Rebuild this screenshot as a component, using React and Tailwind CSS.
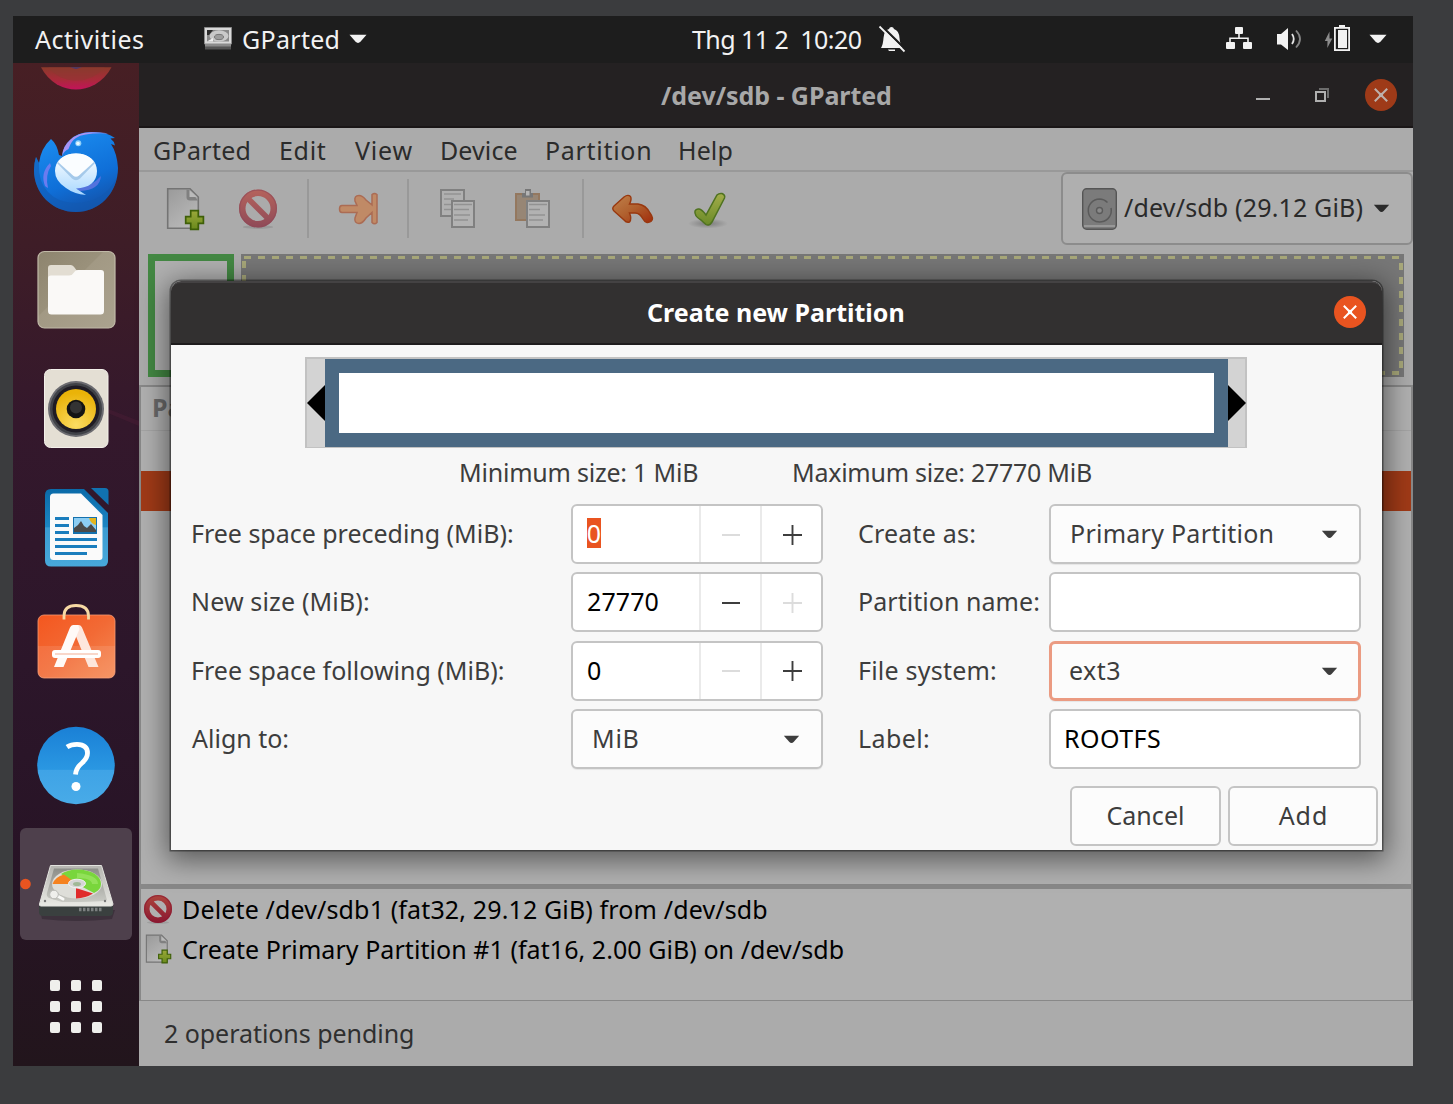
import React from 'react';

/* ---------- shared glyphs ---------- */

function Caret({ className }) {
  return (
    <svg viewBox="0 0 18 10" className={className} fill="currentColor">
      <path d="M0.5 0.8H17.5L11.6 7.6Q9 10.4 6.4 7.6Z" />
    </svg>
  );
}

function CloseDot({ className }) {
  return (
    <span className={'flex h-8 w-8 items-center justify-center rounded-full ' + className}>
      <svg viewBox="0 0 14 14" className="h-[14px] w-[14px]" stroke="currentColor" strokeWidth="2">
        <path d="M0.8 0.8L13.2 13.2M13.2 0.8L0.8 13.2" />
        <circle cx="7" cy="7" r="1.2" fill="currentColor" />
      </svg>
    </span>
  );
}

function Forbidden({ viewBox, className, cx, cy, r, w, from, to }) {
  const id = 'fb' + cx;
  const d = r * 0.62;
  return (
    <svg viewBox={viewBox} className={className}>
      <defs>
        <linearGradient id={id} x1="0" y1={cy - r} x2="0" y2={cy + r} gradientUnits="userSpaceOnUse">
          <stop offset="0" stopColor={from} />
          <stop offset="1" stopColor={to} />
        </linearGradient>
      </defs>
      <ellipse cx={cx} cy={cy + r - 0.5} rx={r * 0.8} ry={r * 0.1} fill="#000" opacity="0.1" />
      <circle cx={cx} cy={cy} r={r - w / 2} fill="none" stroke={'url(#' + id + ')'} strokeWidth={w} />
      <path d={`M${cx - d} ${cy - d}L${cx + d} ${cy + d}`} stroke={'url(#' + id + ')'} strokeWidth={w * 0.85} />
      <circle cx={cx} cy={cy} r={r - 0.6} fill="none" stroke={to} strokeOpacity="0.6" strokeWidth="1.2" />
    </svg>
  );
}

function NewPage({ viewBox, className }) {
  return (
    <svg viewBox={viewBox} className={className}>
      <defs>
        <linearGradient id="pg" x1="0" y1="0" x2="0.6" y2="1">
          <stop offset="0" stopColor="#9a9a9a" />
          <stop offset="1" stopColor="#b8b8b8" />
        </linearGradient>
        <linearGradient id="plus" x1="0" y1="0" x2="0" y2="1">
          <stop offset="0" stopColor="#9aa83a" />
          <stop offset="1" stopColor="#6a8a1c" />
        </linearGradient>
      </defs>
      <path d="M167.700 188.700H190L198.300 197V228.300H167.700Z" fill="url(#pg)" stroke="#747474" strokeWidth="1.600" />
      <path d="M186.500 189.500V197Q186.500 200.500 190 200.500H198L190 190Z" fill="#808080" />
      <path d="M189.500 190V197H197Z" fill="#bababa" />
      <path
        d="M190.700 210.700H198.300V216.700H203.400V223.300H198.300V229.400H190.700V223.300H185.700V216.700H190.700Z"
        fill="url(#plus)"
        stroke="#3e5f08"
        strokeWidth="1.700"
      />
    </svg>
  );
}

/* ---------- top bar ---------- */

function TopBar() {
  return (
    <header className="flex h-[47px] items-center bg-[#1d1d1d] pb-[2px] text-[#f2f2f2]">
      <span className="ml-[22px] w-[109px] tracking-[0.54px]">Activities</span>
      <svg viewBox="204 27 28 24" className="ml-[60px] h-6 w-7 shrink-0">
        <path d="M204.500 27.500H231.500V44H204.500Z" fill="#d9d9d9" stroke="#8a8a8a" />
        <path d="M207 30H229V41.500H207Z" fill="#888" />
        <ellipse cx="219" cy="36" rx="9.500" ry="5.800" fill="#c9c9c9" />
        <path d="M207 30H213L209 35H207Z" fill="#2b2b2b" />
        <ellipse cx="219" cy="37" rx="4.500" ry="2.600" fill="#9d9d9d" stroke="#777" />
        <path d="M207 41.500L213 38V41.500Z" fill="#eee" />
        <path d="M205 44H231V49.500H205Z" fill="#555" />
        <path d="M205 44H231V46.500H205Z" fill="#8b8b8b" />
      </svg>
      <span className="ml-[10px] w-[99px] tracking-[0.3px]">GParted</span>
      <Caret className="ml-[8px] h-[10px] w-[18px] shrink-0" />
      <span className="ml-[325px] w-[172px] whitespace-pre tracking-[-0.54px]">Thg 11 2{'  '}10:20</span>
      <svg viewBox="878 25 28 28" className="ml-[14px] h-7 w-7 shrink-0">
        <path d="M881 48Q883 45 883.500 38Q884 30 889 29Q889.500 27 891.500 27Q893.500 27 894 29Q899 30.500 899.500 38Q900 45 903 48Z" fill="#f2f2f2" />
        <path d="M888 49.500H895V51H889Z" fill="#f2f2f2" />
        <path d="M881 25.500L906 50" stroke="#1d1d1d" strokeWidth="2.400" />
        <path d="M879.500 26.500L904.500 51.500" stroke="#f2f2f2" strokeWidth="1.800" />
      </svg>
      <svg viewBox="1225 25 28 28" className="ml-[319px] h-7 w-7 shrink-0" fill="#f2f2f2">
        <rect x="1235" y="27" width="8" height="7" rx="1" />
        <path d="M1230 42V38.200H1248V42M1239 33V38" fill="none" stroke="#f2f2f2" strokeWidth="1.600" />
        <rect x="1226" y="42" width="9" height="7" rx="1" />
        <rect x="1243" y="42" width="9" height="7" rx="1" />
      </svg>
      <svg viewBox="1275 25 28 28" className="ml-[22px] h-7 w-7 shrink-0">
        <path d="M1277 34H1281L1288 28V50L1281 44.500H1277Z" fill="#f2f2f2" />
        <path d="M1292 34Q1295.500 39 1292 44" fill="none" stroke="#e5e5e5" strokeWidth="1.800" />
        <path d="M1296 30.500Q1304 39 1296 47.500" fill="none" stroke="#858585" strokeWidth="1.800" />
      </svg>
      <svg viewBox="1324 24 28 29" className="ml-[21px] h-[29px] w-7 shrink-0">
        <path d="M1329.500 31.500L1324.800 41H1327.500L1327.300 48L1332.300 38.500H1329.500Z" fill="#8c8c8c" />
        <rect x="1334.900" y="27.900" width="14.200" height="22.200" fill="none" stroke="#f2f2f2" strokeWidth="1.800" />
        <rect x="1339" y="25" width="6" height="3" fill="#f2f2f2" />
        <rect x="1338" y="30" width="9" height="18" fill="#f2f2f2" />
      </svg>
      <Caret className="ml-[17px] h-[10px] w-[18px] shrink-0" />
    </header>
  );
}

/* ---------- dock ---------- */

function Dock() {
  return (
    <nav className="flex w-[126px] shrink-0 flex-col bg-[linear-gradient(180deg,#471f24_0%,#3e1d27_18%,#34182c_36%,#2c162a_60%,#281426_78%,#22151c_100%)]">
      {/* Firefox, scrolled half out of view */}
      <svg viewBox="13 63 126 49" className="h-[49px] w-[126px]">
        <defs>
          <linearGradient id="ff" x1="0" y1="67" x2="0" y2="90" gradientUnits="userSpaceOnUse">
            <stop offset="0" stopColor="#8a3a2a" />
            <stop offset="0.55" stopColor="#a92a3a" />
            <stop offset="1" stopColor="#c4125c" />
          </linearGradient>
        </defs>
        <path d="M41 67.300H111.500Q106 78 95 84.500Q76 94.500 57 84.500Q46.500 78 41 67.300Z" fill="url(#ff)" />
        <path d="M48 67.300H105Q93 81 76 80.500Q59 80.500 48 67.300Z" fill="#8a3a30" opacity="0.5" />
        <path d="M70 67.300H82L76 69Z" fill="#453a70" />
      </svg>

      {/* Thunderbird */}
      <svg viewBox="13 112 126 119" className="h-[119px] w-[126px]">
        <defs>
          <linearGradient id="tb" x1="0.3" y1="0" x2="0.7" y2="1">
            <stop offset="0" stopColor="#1b8df0" />
            <stop offset="0.6" stopColor="#0f6fd8" />
            <stop offset="1" stopColor="#1450a5" />
          </linearGradient>
          <linearGradient id="env" x1="0" y1="0" x2="0" y2="1">
            <stop offset="0" stopColor="#ffffff" />
            <stop offset="1" stopColor="#a9d8ff" />
          </linearGradient>
        </defs>
        <path d="M62 156Q63 146 70 140Q77 132.500 90 132Q106 131 115 138L110.500 138.500Q114 141 115 145.500L111 144Q117 153 118 168C118 193 99 212 76 212C52 212 34 193 34 170Q34 163 36 157L39 163Q41 148 51 139Q57 144 59 155Z" fill="url(#tb)" />
        <path d="M36 157L39 163Q38 182 48 192Q58 203 76 203Q104 203 117 177C113 198 96 212 76 212C52 212 34 193 34 170Q34 163 36 157Z" fill="#1259b0" opacity="0.55" />
        <path d="M62 156Q63 146 70 140Q78 132 92 132.200Q105 132.500 108 133.500Q84 132.500 76 138Q71 141 68.500 149Q64 151 62 156Z" fill="#a994f4" />
        <path d="M50 163Q40 173 45 186Q46 187 48 188Q45 175 51 166Z" fill="#6a7cf0" />
        <path d="M75 188Q92 187 101 176Q100 190 80 191Z" fill="#6f78e6" opacity="0.7" />
        <path d="M76 153.500C89 153.500 97 161 97 171C97 182 89 188 76 188.500L86 195Q74 194 66 188Q55 181 55 171C55 161 63 153.500 76 153.500Z" fill="url(#env)" />
        <path d="M57 163L72 178.500Q76 182 80 178.500L95 163L93 160.500L76 176L59 160.500Z" fill="#9cc3e6" opacity="0.85" />
        <path d="M58 162Q64 153.500 76 153.500Q88 153.500 94 162L79 175.500Q76 178 73 175.500Z" fill="#fafdff" />
        <circle cx="78.300" cy="143.300" r="3" fill="#8fd0fa" />
        <circle cx="78" cy="143.500" r="1.800" fill="#e8f8ff" />
      </svg>

      {/* Files */}
      <svg viewBox="13 231 126 119" className="h-[119px] w-[126px]">
        <defs>
          <linearGradient id="fl" x1="0" y1="0" x2="1" y2="1">
            <stop offset="0" stopColor="#8d846e" />
            <stop offset="0.42" stopColor="#9a917b" />
            <stop offset="0.43" stopColor="#a29984" />
            <stop offset="1" stopColor="#aba38f" />
          </linearGradient>
        </defs>
        <rect x="38" y="251.500" width="77" height="76.500" rx="6.500" fill="url(#fl)" stroke="#c0b9a7" strokeWidth="1.200" />
        <path d="M48 268Q48 265 51 265H71Q73 265 74.500 267.500L77 271V290H48Z" fill="#e2ddd2" />
        <path d="M48 278Q48 275.500 51 275.500H69Q72 275.500 73.500 273L75 271.200Q76 270 78 270H101Q104 270 104 273V311Q104 314.500 100.500 314.500H51.500Q48 314.500 48 311Z" fill="#faf9f7" />
      </svg>

      {/* Rhythmbox */}
      <svg viewBox="13 350 126 119" className="h-[119px] w-[126px]">
        <defs>
          <radialGradient id="rb" cx="0.5" cy="0.9" r="0.8">
            <stop offset="0" stopColor="#fbdc62" />
            <stop offset="1" stopColor="#eab308" />
          </radialGradient>
        </defs>
        <path d="M108 409L139 421V426L108 413Z" fill="#54203a" opacity="0.35" />
        <rect x="44.500" y="369.500" width="63.500" height="78" rx="6" fill="#e4dfd4" stroke="#f3f0ea" />
        <circle cx="76" cy="409" r="28" fill="#6b6b70" />
        <circle cx="76" cy="409" r="26" fill="#404247" />
        <circle cx="76" cy="409" r="23.500" fill="#1f1c24" />
        <circle cx="76" cy="409" r="20" fill="url(#rb)" />
        <circle cx="76" cy="409" r="9.300" fill="#141414" />
        <circle cx="76" cy="407.500" r="6" fill="#333" />
      </svg>

      {/* LibreOffice Writer */}
      <svg viewBox="13 469 126 119" className="h-[119px] w-[126px]">
        <defs>
          <linearGradient id="lw" x1="0" y1="0" x2="0" y2="1">
            <stop offset="0" stopColor="#0a6aa8" />
            <stop offset="0.49" stopColor="#1c86c4" />
            <stop offset="0.5" stopColor="#3a9bd2" />
            <stop offset="1" stopColor="#48a8da" />
          </linearGradient>
        </defs>
        <path d="M51 489H84L108 513V561Q108 566.500 102 566.500H51Q45 566.500 45 560.500V495Q45 489 51 489Z" fill="url(#lw)" />
        <path d="M91 488H105Q108.500 488 108.500 491.500V505Z" fill="#1172b0" />
        <path d="M53.500 493.500H81L102.500 515V557Q102.500 560 99.500 560H53.500Q50 560 50 556.500V497Q50 493.500 53.500 493.500Z" fill="#fafafa" />
        <path d="M55 517H69V520H55ZM55 524H69V527H55ZM55 531H69V534H55ZM55 538H97V541H55ZM55 545H97V548H55ZM55 552H87V555H55Z" fill="#1a7dbd" />
        <rect x="73" y="517" width="24" height="17" fill="#1571ad" />
        <rect x="74" y="518" width="22" height="14" fill="#8ccdf3" />
        <path d="M89 518H96V525Q91 524 89 518Z" fill="#e5b51d" />
        <path d="M74 532V528L78 525L81 521L84 526L87 528L91 524L96 530V532Z" fill="#4a4a4a" />
      </svg>

      {/* Ubuntu Software */}
      <svg viewBox="13 588 126 119" className="h-[119px] w-[126px]">
        <defs>
          <linearGradient id="us" x1="0" y1="0" x2="1" y2="1">
            <stop offset="0" stopColor="#f4571f" />
            <stop offset="0.5" stopColor="#f26a35" />
            <stop offset="1" stopColor="#f58a54" />
          </linearGradient>
        </defs>
        <rect x="38" y="615" width="77" height="63" rx="6" fill="url(#us)" stroke="#f79a72" strokeWidth="0.8" />
        <path d="M38 646H115V672Q115 678 109 678H44Q38 678 38 672Z" fill="#fff" opacity="0.1" />
        <path d="M64 619.500V616Q64 605.500 76 605.500Q88.500 605.500 88.500 616V619.500" fill="none" stroke="#f7d9a4" strokeWidth="2.800" />
        <path d="M74 625H79Q81 625 82 627.500L98.500 667H88.500L75 634Z" fill="#fde6dc" />
        <path d="M78 625H73Q71 625 70 627.500L54 667H63.500L79.500 629Z" fill="#fffaf7" />
        <rect x="52" y="650" width="49" height="8" rx="3" fill="#fff" />
        <path d="M55 654H98" stroke="#f9d7ca" strokeWidth="1.800" />
      </svg>

      {/* Help */}
      <svg viewBox="13 707 126 118" className="h-[118px] w-[126px]">
        <defs>
          <linearGradient id="hp" x1="0" y1="0" x2="0" y2="1">
            <stop offset="0" stopColor="#1a80d6" />
            <stop offset="0.55" stopColor="#2a97e2" />
            <stop offset="0.56" stopColor="#3fa3e6" />
            <stop offset="1" stopColor="#48abe8" />
          </linearGradient>
        </defs>
        <circle cx="76" cy="765.500" r="38.800" fill="url(#hp)" />
        <path d="M67 747Q71 744.300 77 744.300Q87.500 744.500 87.500 753Q87.500 758 82 763Q76 768 75.500 774.500" fill="none" stroke="#fff" strokeWidth="4.800" />
        <circle cx="76" cy="786.500" r="4.500" fill="#fff" />
      </svg>

      {/* GParted, running */}
      <div className="mx-[7px] mt-[3px] h-[112px] w-[112px] rounded-[6px] bg-[#4e404c]">
        <svg viewBox="20 828 112 112" className="h-[112px] w-[112px]">
          <defs>
            <linearGradient id="hd" x1="0" y1="0" x2="0" y2="1">
              <stop offset="0" stopColor="#b5b5b0" />
              <stop offset="1" stopColor="#e9e9e4" />
            </linearGradient>
            <linearGradient id="plate" x1="0" y1="0" x2="0" y2="1">
              <stop offset="0" stopColor="#8d8e89" />
              <stop offset="1" stopColor="#c9cac4" />
            </linearGradient>
          </defs>
          <circle cx="25.500" cy="884" r="5.300" fill="#e95420" />
          <path d="M40 910H115L112 919Q76 923 42 919Z" fill="#2b222b" opacity="0.5" />
          <path d="M39 904L113 904V912Q113 916 109 916H43Q39 916 39 912Z" fill="#3a403f" />
          <path d="M50.500 865.500H101.500L113 904Q113 906 111 906H41Q39 906 39.500 904Z" fill="url(#hd)" stroke="#e3e3df" />
          <path d="M54 868.500H98L107 900Q104 902 62 902L49 898Q46 896 47 893Z" fill="url(#plate)" />
          <ellipse cx="77" cy="884" rx="25" ry="14.500" fill="#deded9" />
          <path d="M77 884L61 874Q68 869.500 77 869.500C92 869.500 101 876 101 884Q101 890 94 893Z" fill="#79d63c" />
          <path d="M77 878C86 878 92 880 92 884L98 884Q98 875 77 873Z" fill="#a4e86c" opacity="0.6" />
          <path d="M77 884L64 874.500Q55 877 52.500 884Z" fill="#f5821f" />
          <path d="M76 888L93 893.500Q86 898 76 898.500Z" fill="#e02b2b" />
          <ellipse cx="77" cy="883.500" rx="8.500" ry="4.300" fill="#d5d5d5" stroke="#f2f2f2" />
          <ellipse cx="77" cy="884" rx="4" ry="2" fill="#a0b896" />
          <path d="M52 893L63 899" stroke="#fafaf8" strokeWidth="3" strokeLinecap="round" />
          <circle cx="54" cy="894.500" r="4.300" fill="#efefec" stroke="#b8b8b4" />
          <circle cx="45" cy="901" r="1.200" fill="#777" />
          <circle cx="105" cy="901" r="1.200" fill="#777" />
          <path d="M79 909.500H103" stroke="#7c8080" strokeWidth="3.500" strokeDasharray="2.500 1.500" />
        </svg>
      </div>

      {/* Show applications */}
      <div className="mt-[40px] grid grid-cols-[repeat(3,10px)] justify-center gap-[11px]">
        {Array.from({ length: 9 }, (_, i) => (
          <span key={i} className="h-[11px] w-[10px] rounded-[2px] bg-[#efefec] -mb-px" />
        ))}
      </div>
    </nav>
  );
}

/* ---------- main window ---------- */

function TitleBar() {
  return (
    <div className="flex h-[65px] items-center border-b-2 border-[#1a1617] bg-[#242122] text-[#a8a8a8]">
      <span className="ml-[522px] w-[234px] font-bold tracking-[-0.05px]">/dev/sdb - GParted</span>
      <span className="ml-[361px] mt-[8px] h-[2px] w-[14px] bg-[#b0b0b0]" />
      <svg viewBox="1315 88 14 15" className="ml-[45px] mt-[2px] h-[15px] w-[14px]" fill="none">
        <path d="M1319 89H1328V98" stroke="#6c6c6c" strokeWidth="2" />
        <rect x="1316" y="92" width="9" height="9" stroke="#b0b0b0" strokeWidth="2" />
      </svg>
      <CloseDot className="ml-[36px] bg-[#9e3a18] text-[#bdb0ab]" />
    </div>
  );
}

function MenuBar() {
  return (
    <div className="flex h-[44px] items-center border-b-2 border-[#999] bg-[#ababab] pl-[14px] pt-px text-[#2b2b2b]">
      <span className="w-[126px] tracking-[0.3px]">GParted</span>
      <span className="w-[76px] tracking-[0.7px]">Edit</span>
      <span className="w-[85px] tracking-[0.8px]">View</span>
      <span className="w-[105px] tracking-[0.1px]">Device</span>
      <span className="w-[133px] tracking-[0.7px]">Partition</span>
      <span className="tracking-[0.1px]">Help</span>
    </div>
  );
}

function Separator() {
  return <span className="mt-[7px] h-[59px] w-[2px] shrink-0 self-start bg-[#999]" />;
}

function ToolBar() {
  return (
    <div className="flex h-[73px] items-center bg-[#ababab] pl-[11px]">
      <NewPage viewBox="150 172 73 73" className="h-[73px] w-[73px] shrink-0" />
      <Forbidden viewBox="223 172 84 73" className="h-[73px] w-[84px] shrink-0" cx={258} cy={208.5} r={19} w={6.5} from="#b5635c" to="#8f4a58" />
      <Separator />
      <svg viewBox="309 172 98 73" className="h-[73px] w-[98px] shrink-0">
        <path
          d="M342 205.500H357L355 201Q354 195.500 359 195.500Q362.500 195.500 366 200L372 205V194.500Q374.500 192.500 377 194.500V222.500Q374.500 225 372 222.500V212.500L366 218Q362.500 223.500 359 223.500Q354 223 355 218L357 212.500H342Q339.500 212.500 339.500 209Q339.500 205.500 342 205.500Z"
          fill="#c08a66"
          stroke="#ab6c54"
          strokeWidth="1.500"
        />
      </svg>
      <Separator />
      <svg viewBox="409 172 86 73" className="h-[73px] w-[86px] shrink-0">
        <rect x="441" y="190" width="23" height="26" fill="#b0b0b0" stroke="#808080" strokeWidth="2" />
        <path d="M444 194H461M444 199H454M444 204.500H451M444 209.500H451" stroke="#929292" strokeWidth="1.600" />
        <rect x="452" y="201" width="22" height="26" fill="#b2b2b2" stroke="#808080" strokeWidth="2" />
        <path d="M454 204.500H472M454 209.500H469M454 215H470M454 220H468" stroke="#929292" strokeWidth="1.600" />
      </svg>
      <svg viewBox="495 172 87 73" className="h-[73px] w-[87px] shrink-0">
        <rect x="516" y="194" width="23" height="26" fill="#978675" stroke="#94785f" strokeWidth="2" />
        <path d="M522 193H525V189H531V193H533V197.500H522Z" fill="#777" />
        <rect x="526" y="191" width="3.500" height="4.500" fill="#b5b5b5" />
        <rect x="527" y="201" width="22" height="26" fill="#b2b2b2" stroke="#808080" strokeWidth="2" />
        <path d="M529 204.500H547M529 209.500H540M529 215H545M529 220H543" stroke="#929292" strokeWidth="1.600" />
      </svg>
      <Separator />
      <svg viewBox="584 172 88 73" className="h-[73px] w-[88px] shrink-0">
        <defs>
          <linearGradient id="un" x1="0" y1="0" x2="1" y2="1">
            <stop offset="0" stopColor="#c0824c" />
            <stop offset="0.5" stopColor="#b0602e" />
            <stop offset="1" stopColor="#a02c0c" />
          </linearGradient>
        </defs>
        <path
          d="M614 206L624 197Q628 194 630.500 196.500Q632 199 629.500 204H638Q646 205 650 213Q654.500 219 651 221.500Q646 224.500 643 219Q640 213 635 213H629.500Q632 219 629.500 222Q626.500 223 624 220L614 211Q611.500 208.500 614 206Z"
          fill="url(#un)"
          stroke="#98380f"
          strokeWidth="1.400"
        />
      </svg>
      <svg viewBox="672 172 88 73" className="h-[73px] w-[88px] shrink-0">
        <defs>
          <linearGradient id="ck" x1="0" y1="0" x2="0" y2="1">
            <stop offset="0" stopColor="#a3ad4a" />
            <stop offset="1" stopColor="#6a8a28" />
          </linearGradient>
          <radialGradient id="cks">
            <stop offset="0" stopColor="#000" stopOpacity="0.28" />
            <stop offset="1" stopColor="#000" stopOpacity="0" />
          </radialGradient>
        </defs>
        <ellipse cx="708" cy="223.500" rx="20" ry="5" fill="url(#cks)" />
        <path
          d="M695 211Q696 208.500 699 209Q702 209.500 706 215L717 195Q719 193 722 193.500Q725.500 195 724.500 198L712 222Q709 226.500 706 224.500Q703 222 701 220Q694 216 695 211Z"
          fill="url(#ck)"
          stroke="#4f7220"
          strokeWidth="1.500"
        />
      </svg>
      <div className="ml-auto flex h-[73px] w-[352px] items-center rounded-[6px] border-2 border-[#8c8c8c] bg-[#afafaf] text-[#2a2a2a]">
        <svg viewBox="1082 188 35 42" className="ml-[19px] h-[42px] w-[35px] shrink-0">
          <rect x="1082.700" y="188.700" width="33.600" height="40.600" rx="4" fill="#7b7b7b" stroke="#555" strokeWidth="1.400" />
          <path d="M1084 226H1115" stroke="#989898" strokeWidth="2" />
          <path d="M1107.500 202.500Q1104 199 1099.500 199A11.500 11.500 0 1 0 1111 208" fill="none" stroke="#5a5a5a" strokeWidth="1.500" />
          <circle cx="1099.500" cy="210.500" r="3" fill="#8a8a8a" stroke="#5a5a5a" strokeWidth="1.400" />
        </svg>
        <span className="ml-[7px] w-[241px] whitespace-nowrap pb-[3px] tracking-[0.17px]">/dev/sdb (29.12 GiB)</span>
        <Caret className="ml-[8px] h-[9px] w-[17px] shrink-0" />
      </div>
    </div>
  );
}

function DiskMap() {
  return (
    <div className="flex h-[140px] gap-[7px] bg-[#ababab] pl-[9px] pt-[9px]">
      <div className="h-[123px] w-[86px] border-[7px] border-[#438843] bg-[#b0b0b0]" />
      <div className="flex h-[123px] w-[1163px] flex-col bg-[#777] pb-[2px] pt-[2px]">
        <div className="ml-[3px] mr-[4px] h-[3px] bg-[repeating-linear-gradient(90deg,#a8a87a_0_7px,transparent_7px_14px)]" />
        <div className="flex flex-1 justify-between pl-px pr-px pt-[2px]">
          <div className="w-[4px] bg-[repeating-linear-gradient(180deg,#a8a87a_0_7px,transparent_7px_14px)]" />
          <div className="mt-[2px] w-[4px] bg-[repeating-linear-gradient(180deg,#a8a87a_0_7px,transparent_7px_14px)]" />
        </div>
        <div className="ml-[3px] mr-[5px] h-[4px] bg-[repeating-linear-gradient(270deg,#a8a87a_0_7px,transparent_7px_14px)]" />
      </div>
    </div>
  );
}

function PartitionTable() {
  return (
    <div className="h-[499px] border-x-2 border-t-2 border-[#888] bg-[#b0b0b0]">
      <div className="flex h-[44px] items-center border-b border-[#a4a4a4] pb-[3px] pl-[11px] font-bold text-[#6a6a6a]">Partition</div>
      <div className="h-[40px]" />
      <div className="h-[40px] bg-[#a03a17]" />
    </div>
  );
}

function Operations() {
  return (
    <div className="h-[117px] border-x-2 border-b border-t-[5px] border-[#888] bg-[#b0b0b0] text-black">
      <div className="flex h-[40px] items-center">
        <Forbidden viewBox="0 0 30 30" className="ml-[2px] h-[30px] w-[30px] shrink-0" cx={15} cy={15} r={14} w={5.5} from="#ad453d" to="#8a1730" />
        <span className="ml-[9px] tracking-[0.14px]">Delete /dev/sdb1 (fat32, 29.12 GiB) from /dev/sdb</span>
      </div>
      <div className="flex h-[40px] items-center">
        <NewPage viewBox="166 187 39 44" className="ml-[4px] h-[30px] w-[27px] shrink-0" />
        <span className="ml-[10px] tracking-[0.06px]">Create Primary Partition #1 (fat16, 2.00 GiB) on /dev/sdb</span>
      </div>
    </div>
  );
}

/* ---------- dialog ---------- */

const BOX = 'flex h-[60px] items-center overflow-hidden rounded-[6px] border-2 border-[#c4c4c4]';

function Spin({ value, selected, minusOff, plusOff }) {
  return (
    <div className={BOX + ' w-[252px] bg-white'}>
      <div className="flex h-full w-[126px] items-center pl-[14px] text-black">
        <span className={selected ? 'mb-[2px] flex h-[30px] w-[14px] items-center justify-center bg-[#e95420] text-white' : 'pb-[2px] tracking-[0.1px]'}>{value}</span>
      </div>
      <div className={'flex h-full w-[61px] items-center justify-center border-l-2 border-[#eaeaea] ' + (minusOff ? 'text-[#dcdcdc]' : 'text-[#3d3d3d]')}>
        <span className="mt-px h-[2px] w-[18px] bg-current" />
      </div>
      <div className={'flex h-full w-[61px] items-center justify-center border-l-2 border-[#eaeaea] pl-px ' + (plusOff ? 'text-[#dcdcdc]' : 'text-[#3d3d3d]')}>
        <svg viewBox="0 0 19 20" className="mt-px h-[20px] w-[19px]" stroke="currentColor" strokeWidth="1.900">
          <path d="M9.500 0V20M0 10H19" />
        </svg>
      </div>
    </div>
  );
}

function Combo({ children, width, focused, spacing }) {
  return (
    <div
      className={
        'flex h-[60px] items-center justify-between rounded-[6px] bg-[#fcfcfc] text-[#3d3d3d] shadow-[0_1px_1px_rgba(0,0,0,0.07)] ' +
        width +
        (focused ? ' border-[3px] border-[#eb9b82] pl-[17px] pr-[20px]' : ' border-2 border-[#c4c4c4] pl-[19px] pr-[21px]')
      }
    >
      <span className={'pb-[2px] ' + spacing}>{children}</span>
      <Caret className="mt-px h-[9px] w-[17px]" />
    </div>
  );
}

function Label({ children, className }) {
  return <span className={'whitespace-nowrap pb-[2px] ' + className}>{children}</span>;
}

function Dialog() {
  return (
    <section className="absolute left-[158px] top-[265px] h-[569px] w-[1211px] rounded-t-[10px] bg-[#f7f7f7] text-[#3d3d3d] shadow-[0_6px_28px_4px_rgba(0,0,0,0.5),0_0_0_1.5px_rgba(0,0,0,0.4)]">
      <div className="flex h-[64px] items-center rounded-t-[10px] border-b-2 border-t-2 border-b-[#1e1c1d] border-t-[#444243] bg-[#323030] pb-[2px] text-white">
        <span className="ml-[476px] w-[262px] whitespace-nowrap font-bold">Create new Partition</span>
        <CloseDot className="ml-[425px] bg-[#e95420] text-white" />
      </div>

      <div className="ml-[134px] mt-[12px] flex h-[91px] w-[942px] items-center border-2 border-b border-[#c2c2c2] bg-[#d3d3d3]">
        <svg viewBox="0 0 18 36" className="h-[36px] w-[18px] shrink-0">
          <path d="M18 0V36L0 18Z" />
        </svg>
        <div className="h-full w-[903px] shrink-0 border-[14px] border-[#4b6983] bg-white" />
        <svg viewBox="0 0 18 36" className="h-[36px] w-[18px] shrink-0">
          <path d="M0 0V36L18 18Z" />
        </svg>
      </div>

      <div className="flex h-[56px] items-center pb-[8px]">
        <span className="ml-[288px] w-[333px] tracking-[-0.22px]">Minimum size: 1 MiB</span>
        <span className="tracking-[-0.26px]">Maximum size: 27770 MiB</span>
      </div>

      <div className="ml-[18px] grid grid-cols-[382px_252px_226px_312px] grid-rows-[repeat(4,60px)] items-center gap-y-[8.3px]">
        <Label className="pl-[2px] tracking-[-0.02px]">Free space preceding (MiB):</Label>
        <Spin value="0" selected minusOff />
        <Label className="pl-[35px] tracking-[0.2px]">Create as:</Label>
        <Combo width="w-[312px]" spacing="tracking-[0.26px]">Primary Partition</Combo>

        <Label className="pl-[2px] tracking-[0.15px]">New size (MiB):</Label>
        <Spin value="27770" plusOff />
        <Label className="pl-[35px] tracking-[0.05px]">Partition name:</Label>
        <div className={BOX + ' w-[312px] bg-white'} />

        <Label className="pl-[2px] tracking-[0.01px]">Free space following (MiB):</Label>
        <Spin value="0" minusOff />
        <Label className="pl-[35px] tracking-[0.22px]">File system:</Label>
        <Combo width="w-[312px]" focused spacing="tracking-[0.5px]">ext3</Combo>

        <Label className="pl-[3px] tracking-[0px]">Align to:</Label>
        <Combo width="w-[252px]" spacing="tracking-[0.7px]">MiB</Combo>
        <Label className="pl-[35px] tracking-[0.4px]">Label:</Label>
        <div className={BOX + ' w-[312px] bg-white pl-[13px] text-black'}>
          <span className="pb-[2px] tracking-[0.45px]">ROOTFS</span>
        </div>
      </div>

      <div className="mt-[17px] flex justify-end gap-[7px] pr-[4px]">
        <button className="h-[60px] w-[151px] rounded-[6px] border-2 border-[#c4c4c4] bg-[#fcfcfc] pb-[2px] tracking-[0.05px]">Cancel</button>
        <button className="h-[60px] w-[150px] rounded-[6px] border-2 border-[#c4c4c4] bg-[#fcfcfc] pb-[2px] pl-px tracking-[1px]">Add</button>
      </div>
    </section>
  );
}

export default function App() {
  return (
    <div className="h-[1104px] w-[1453px] overflow-hidden bg-[#3b3c3e] pl-[13px] pt-[16px] font-['Noto_Sans',sans-serif] text-[25px] leading-[34px]">
      <div className="relative h-[1050px] w-[1400px] overflow-hidden">
        <TopBar />
        <div className="flex h-[1003px]">
          <Dock />
          <main className="flex w-[1274px] flex-col bg-[#ababab]">
            <TitleBar />
            <MenuBar />
            <ToolBar />
            <DiskMap />
            <PartitionTable />
            <Operations />
            <div className="flex flex-1 items-center pb-[2px] pl-[25px] tracking-[-0.05px] text-[#2f2f2f]">2 operations pending</div>
          </main>
        </div>
        <Dialog />
      </div>
    </div>
  );
}
